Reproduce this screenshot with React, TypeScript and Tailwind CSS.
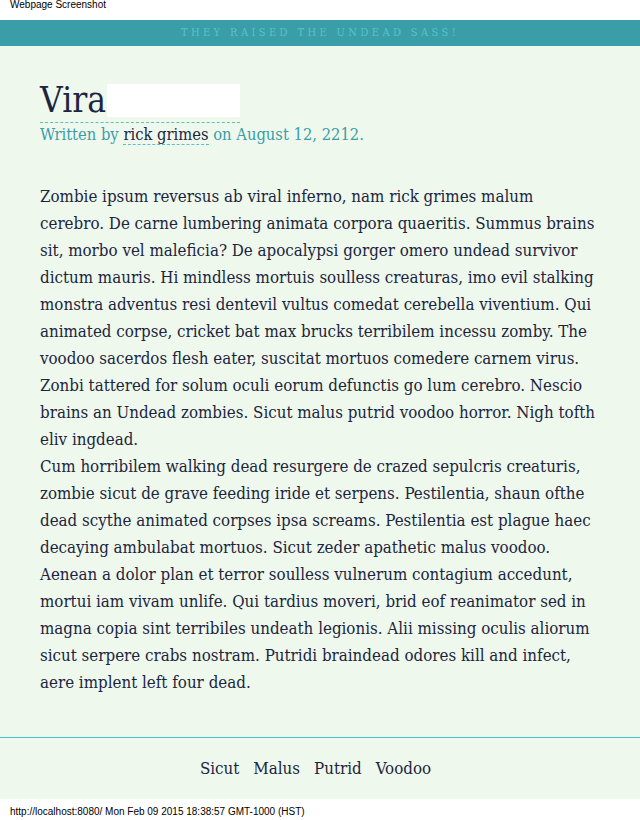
const serif = { fontFamily: '"DejaVu Serif", "Liberation Serif", serif', fontStretch: 'condensed' } as const;

const paragraphs = [
  'Zombie ipsum reversus ab viral inferno, nam rick grimes malum cerebro. De carne lumbering animata corpora quaeritis. Summus brains sit, morbo vel maleficia? De apocalypsi gorger omero undead survivor dictum mauris. Hi mindless mortuis soulless creaturas, imo evil stalking monstra adventus resi dentevil vultus comedat cerebella viventium. Qui animated corpse, cricket bat max brucks terribilem incessu zomby. The voodoo sacerdos flesh eater, suscitat mortuos comedere carnem virus. Zonbi tattered for solum oculi eorum defunctis go lum cerebro. Nescio brains an Undead zombies. Sicut malus putrid voodoo horror. Nigh tofth eliv ingdead.',
  'Cum horribilem walking dead resurgere de crazed sepulcris creaturis, zombie sicut de grave feeding iride et serpens. Pestilentia, shaun ofthe dead scythe animated corpses ipsa screams. Pestilentia est plague haec decaying ambulabat mortuos. Sicut zeder apathetic malus voodoo. Aenean a dolor plan et terror soulless vulnerum contagium accedunt, mortui iam vivam unlife. Qui tardius moveri, brid eof reanimator sed in magna copia sint terribiles undeath legionis. Alii missing oculis aliorum sicut serpere crabs nostram. Putridi braindead odores kill and infect, aere implent left four dead.',
];

const links = ['Sicut', 'Malus', 'Putrid', 'Voodoo'];

export default function App() {
  return (
    <div className="w-[640px] min-h-[820px] bg-white flex flex-col">
      <div className="h-[20px] px-[10px] text-[10px] leading-[10px] text-black font-['Liberation_Sans',sans-serif]">
        Webpage Screenshot
      </div>

      <header className="h-[26px] bg-[#3a9ea8] flex items-center justify-center" style={serif}>
        <span className="text-[11px] tracking-[3.4px] text-[#56c4ca] uppercase">
          They raised the undead Sass!
        </span>
      </header>

      <main className="bg-[#eff8ec] flex flex-col text-[#1b2540]" style={serif}>
        <article className="pl-[40px] pr-[44px] pt-[34px]">
          <h1 className="inline-flex items-start text-[35px] leading-[40px] pb-[2px] border-b border-dashed border-[#5cbfc4]">
            Vira
            <span className="inline-block w-[133px] h-[33px] bg-white mt-[4px] ml-[1px]" />
          </h1>
          <p className="text-[16.4px] leading-[24px] text-[#3a9ea8]">
            Written by{' '}
            <a className="text-[#1b2540] border-b border-dashed border-[#5cbfc4]">rick grimes</a> on August 12, 2212.
          </p>

          <div className="mt-[36px] text-[16.8px] leading-[27px]">
            {paragraphs.map((p, i) => (
              <p key={i}>{p}</p>
            ))}
          </div>
        </article>

        <footer className="mt-[41px] border-t border-[#4bc2c9] h-[62px] pr-[9px] flex items-center justify-center gap-[14px] text-[16.8px]">
          {links.map((l) => (
            <a key={l}>{l}</a>
          ))}
        </footer>
      </main>

      <div className="h-[20px] px-[10px] pt-[8px] text-[10px] leading-[10px] text-black font-['Liberation_Sans',sans-serif]">
        http://localhost:8080/ Mon Feb 09 2015 18:38:57 GMT-1000 (HST)
      </div>
    </div>
  );
}
